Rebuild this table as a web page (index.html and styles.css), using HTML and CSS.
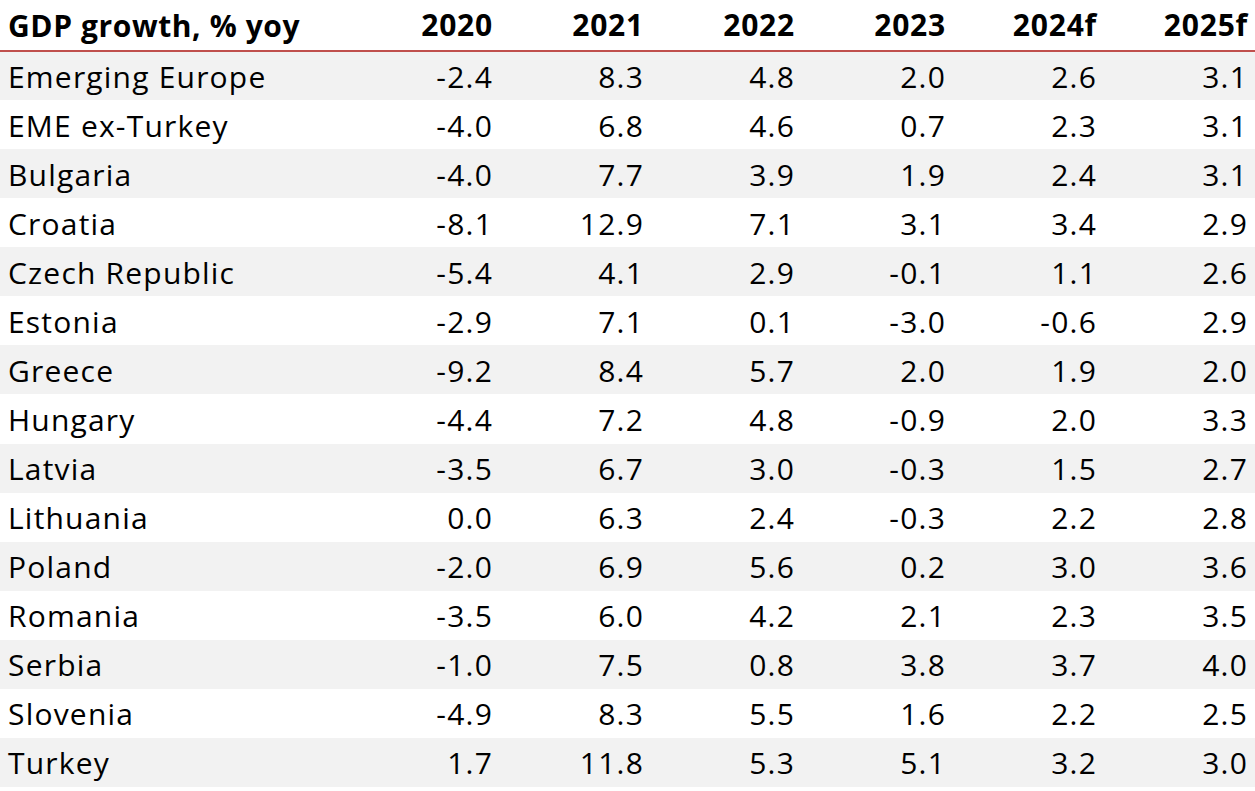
FILE: index.html
```html
<!DOCTYPE html>
<html>
<head>
<meta charset="utf-8">
<link rel="stylesheet" href="styles.css">
</head>
<body>
<table class="gdp">
  <thead>
    <tr><th class="name">GDP growth, % yoy</th><th>2020</th><th>2021</th><th>2022</th><th>2023</th><th>2024f</th><th>2025f</th></tr>
  </thead>
  <tbody>
    <tr><td class="name">Emerging Europe</td><td>-2.4</td><td>8.3</td><td>4.8</td><td>2.0</td><td>2.6</td><td>3.1</td></tr>
    <tr><td class="name">EME ex-Turkey</td><td>-4.0</td><td>6.8</td><td>4.6</td><td>0.7</td><td>2.3</td><td>3.1</td></tr>
    <tr><td class="name">Bulgaria</td><td>-4.0</td><td>7.7</td><td>3.9</td><td>1.9</td><td>2.4</td><td>3.1</td></tr>
    <tr><td class="name">Croatia</td><td>-8.1</td><td>12.9</td><td>7.1</td><td>3.1</td><td>3.4</td><td>2.9</td></tr>
    <tr><td class="name">Czech Republic</td><td>-5.4</td><td>4.1</td><td>2.9</td><td>-0.1</td><td>1.1</td><td>2.6</td></tr>
    <tr><td class="name">Estonia</td><td>-2.9</td><td>7.1</td><td>0.1</td><td>-3.0</td><td>-0.6</td><td>2.9</td></tr>
    <tr><td class="name">Greece</td><td>-9.2</td><td>8.4</td><td>5.7</td><td>2.0</td><td>1.9</td><td>2.0</td></tr>
    <tr><td class="name">Hungary</td><td>-4.4</td><td>7.2</td><td>4.8</td><td>-0.9</td><td>2.0</td><td>3.3</td></tr>
    <tr><td class="name">Latvia</td><td>-3.5</td><td>6.7</td><td>3.0</td><td>-0.3</td><td>1.5</td><td>2.7</td></tr>
    <tr><td class="name">Lithuania</td><td>0.0</td><td>6.3</td><td>2.4</td><td>-0.3</td><td>2.2</td><td>2.8</td></tr>
    <tr><td class="name">Poland</td><td>-2.0</td><td>6.9</td><td>5.6</td><td>0.2</td><td>3.0</td><td>3.6</td></tr>
    <tr><td class="name">Romania</td><td>-3.5</td><td>6.0</td><td>4.2</td><td>2.1</td><td>2.3</td><td>3.5</td></tr>
    <tr><td class="name">Serbia</td><td>-1.0</td><td>7.5</td><td>0.8</td><td>3.8</td><td>3.7</td><td>4.0</td></tr>
    <tr><td class="name">Slovenia</td><td>-4.9</td><td>8.3</td><td>5.5</td><td>1.6</td><td>2.2</td><td>2.5</td></tr>
    <tr><td class="name">Turkey</td><td>1.7</td><td>11.8</td><td>5.3</td><td>5.1</td><td>3.2</td><td>3.0</td></tr>
  </tbody>
</table>
</body>
</html>
```
FILE: styles.css
```css
html, body {
  margin: 0;
  padding: 0;
  background: #ffffff;
}
.gdp {
  border-collapse: collapse;
  width: 1255px;
  table-layout: fixed;
  font-family: "Open Sans", Lato, sans-serif;
  font-size: 30px;
  line-height: 1;
  color: #000000;
}
.gdp th, .gdp td {
  padding: 2px 7px 0 0;
  text-align: right;
  white-space: nowrap;
  width: 151px;
  box-sizing: border-box;
  vertical-align: middle;
  letter-spacing: 1.2px;
}
.gdp th.name, .gdp td.name {
  text-align: left;
  padding: 2px 0 0 8px;
  width: 349px;
}
.gdp thead th {
  font-weight: 700;
  height: 51px;
  padding-top: 0;
  letter-spacing: 0.8px;
  border-bottom: 2px solid #c0504d;
}
.gdp thead th.name {
  letter-spacing: 0.6px;
}
.gdp tbody td {
  height: 49.07px;
  font-weight: 400;
}
.gdp tbody tr:nth-child(odd) td {
  background: #f2f2f2;
}
```
